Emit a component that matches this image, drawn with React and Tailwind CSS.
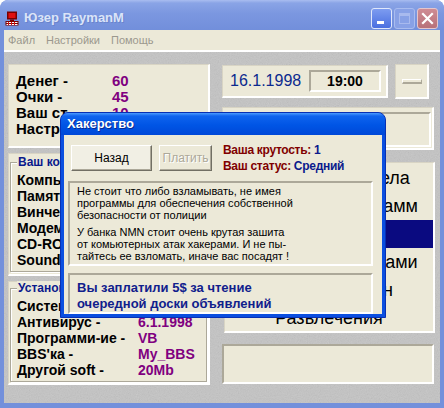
import React from "react";

const panel =
  "bg-[#ece9d8] border-t border-l border-t-[#d8d4c4] border-l-[#d8d4c4] border-b-2 border-r-2 border-b-white border-r-white";
const sunken =
  "bg-[#ece9d8] border-t-2 border-l-2 border-t-[#aca899] border-l-[#aca899] border-b-2 border-r-2 border-b-white border-r-white";

function PcIcon() {
  return (
    <svg width="15" height="15" viewBox="0 0 15 15">
      <rect x="2" y="0.5" width="10" height="8" fill="#7a0000" />
      <rect x="3.5" y="2" width="7" height="5" fill="#e01010" />
      <rect x="5" y="8.5" width="4" height="1.5" fill="#7a0000" />
      <rect x="0.5" y="10" width="13" height="4.5" fill="#7a0000" />
      <rect x="1.5" y="11" width="11" height="1" fill="#ffffff" />
      <rect x="1.5" y="13" width="11" height="1" fill="#ffffff" />
      <rect x="3" y="11" width="1" height="3" fill="#e01010" />
      <rect x="6" y="11" width="1" height="3" fill="#e01010" />
      <rect x="9" y="11" width="1" height="3" fill="#e01010" />
    </svg>
  );
}

function TitleBar() {
  return (
    <div className="flex h-[30px] items-start rounded-t-[8px] bg-[linear-gradient(to_bottom,#a9bdf0_0%,#8aa4e6_10%,#7b97e0_45%,#728fdb_100%)] pl-[5px] pr-[6px] pt-[6px]">
      <div className="flex h-[24px] items-center gap-[4px]">
        <PcIcon />
        <span className="text-[13px] font-bold text-[#dbe4f8] [text-shadow:1px_1px_0_#6a84cc]">Юзер RaymanM</span>
      </div>
      <div className="ml-auto mt-[2px] flex gap-[2px]">
        <div className="relative h-[21px] w-[21px] rounded-[3px] border border-[#dfe7fb] bg-[linear-gradient(to_bottom,#7d9cf0,#4a6fe0)]">
          <div className="absolute bottom-[4px] left-[5px] h-[3px] w-[7px] bg-white" />
        </div>
        <div className="flex h-[21px] w-[21px] items-center justify-center rounded-[3px] border border-[#a9bcef] bg-[#88a1e6]">
          <div className="h-[11px] w-[11px] border border-t-[3px] border-[#a8baee]" />
        </div>
        <div className="flex h-[21px] w-[21px] items-center justify-center rounded-[3px] border border-[#e4c6cc] bg-[linear-gradient(to_bottom,#cf8c94,#b7717a)]">
          <svg width="13" height="13" viewBox="0 0 13 13">
            <path d="M2 2 L11 11 M11 2 L2 11" stroke="#ffffff" strokeWidth="2.2" strokeLinecap="square" />
          </svg>
        </div>
      </div>
    </div>
  );
}

function Menu() {
  return (
    <div className="flex h-[22px] items-center gap-[11px] border-b-2 border-white bg-[#ece9d8] pl-[4px] text-[11px] text-[#9b988e]">
      <span>Файл</span>
      <span>Настройки</span>
      <span>Помощь</span>
    </div>
  );
}

function Group({ title, className, children }) {
  return (
    <div className={`relative border border-[#aca899] shadow-[inset_1px_1px_0_#ffffff,1px_1px_0_#ffffff] ${className}`}>
      <span className="absolute left-[6px] top-[-8px] bg-[#ece9d8] px-[1px] text-[12px] font-bold leading-[14px] text-[#0a1a8c]">
        {title}
      </span>
      {children}
    </div>
  );
}

function Rows({ rows, col }) {
  return (
    <div className={`grid ${col} text-[14px] font-bold leading-[16px]`}>
      {rows.map(([label, value]) => (
        <React.Fragment key={label}>
          <span className="whitespace-nowrap text-black">{label}</span>
          <span className="whitespace-nowrap text-[#800080]">{value}</span>
        </React.Fragment>
      ))}
    </div>
  );
}

function LeftColumn() {
  return (
    <div className="flex w-[202px] flex-col gap-[5px]">
      <div className={`${panel} h-[84px] pl-[7px] pt-[8px]`}>
        <div className="grid grid-cols-[96px_1fr] whitespace-nowrap text-[15px] font-bold leading-[16px]">
          <span>Денег -</span>
          <span className="text-[#800080]">60</span>
          <span>Очки -</span>
          <span className="text-[#800080]">45</span>
          <span>Ваш ст</span>
          <span className="text-[#800080]">10</span>
          <span>Настр</span>
          <span />
        </div>
      </div>
      <div className={`${panel} h-[123px] pl-[1px] pt-[8px]`}>
        <Group title="Ваш компьютер" className="mr-[1px] h-[110px] pl-[6px] pt-[9px]">
          <Rows
            col="grid-cols-[96px_1fr]"
            rows={[
              ["Компьютер", ""],
              ["Память", ""],
              ["Винчестер", ""],
              ["Модем", ""],
              ["CD-ROM", ""],
              ["Sound", ""],
            ]}
          />
        </Group>
      </div>
      <div className={`${panel} h-[104px] pl-[1px] pt-[6px]`}>
        <Group title="Установленный софт" className="mr-[1px] h-[94px] pl-[6px] pt-[9px]">
          <Rows
            col="grid-cols-[121px_1fr]"
            rows={[
              ["Система", ""],
              ["Антивирус -", "6.1.1998"],
              ["Программи-ие -", "VB"],
              ["BBS'ка -", "My_BBS"],
              ["Другой soft -", "20Mb"],
            ]}
          />
        </Group>
      </div>
    </div>
  );
}

const menuItems = ["Справочник отдела", "Написание программ", "", "Общение с хакерами", "Идти в магазин", "Развлечения"];

function RightColumn() {
  return (
    <div className="flex w-[213px] flex-col">
      <div className="flex h-[35px] gap-[7px]">
        <div className={`${panel} mt-[1px] flex h-[33px] w-[166px] items-center justify-between pl-[7px] pr-[5px]`}>
          <span className="text-[16px] text-[#0b2a8e]">16.1.1998</span>
          <div className={`${sunken} flex h-[22px] w-[72px] items-center justify-center text-[14px] font-bold text-black`}>
            19:00
          </div>
        </div>
        <div className={`${panel} flex h-[35px] w-[34px] items-center justify-center`}>
          <div className="h-[5px] w-[20px] border-t border-l border-white border-b-2 border-r border-b-[#aca899] border-r-[#aca899]" />
        </div>
      </div>
      <div className={`${panel} mt-[8px] flex h-[43px] w-[212px] items-start pl-[7px] pr-[1px]`}>
        <span className="pt-[1px] text-[12px] font-bold text-[#0a1a8c]">Ваша</span>
        <div className={`${sunken} ml-auto mt-[4px] h-[35px] w-[100px]`} />
      </div>
      <div className={`${panel} ml-[2px] mt-[12px] h-[171px] w-[211px] pt-[1px]`}>
        {menuItems.map((item, i) => (
          <div
            key={i}
            className={`flex h-[28px] items-center justify-center whitespace-nowrap text-[18px] ${i === 2 ? "bg-[#0a0a80] text-white" : "text-black"}`}
          >
            {item}
          </div>
        ))}
      </div>
      <div className={`${sunken} mt-[11px] h-[40px] w-[212px]`} />
    </div>
  );
}

function HackDialog() {
  return (
    <div className="absolute left-[60px] top-[112px] flex h-[206px] w-[326px] flex-col rounded-t-[8px] border border-[#0730b4] bg-[#0b4fe0]">
      <div className="flex h-[27px] items-center rounded-t-[7px] bg-[linear-gradient(to_bottom,#4b9bff_0%,#0f63ee_14%,#0055e5_55%,#0048d8_100%)] pl-[6px] text-[13px] font-bold text-white [text-shadow:1px_1px_0_#0a2a90]">
        Хакерство
      </div>
      <div className="mx-[3px] mb-[3px] flex flex-1 flex-col bg-[#ece9d8] pt-[10px]">
        <div className="flex items-start pl-[7px]">
          <div className="flex h-[26px] w-[81px] items-center justify-center border border-t-white border-l-white border-b-[#716f64] border-r-[#716f64] bg-[#f1efe4] text-[12px] text-black shadow-[inset_-1px_-1px_0_#aca899]">
            Назад
          </div>
          <div className="ml-[7px] flex h-[26px] w-[53px] items-center justify-center border border-t-white border-l-white border-b-[#716f64] border-r-[#716f64] bg-[#ece9d8] text-[12px] text-[#aca899] shadow-[inset_-1px_-1px_0_#aca899] [text-shadow:1px_1px_0_#ffffff]">
            Платить
          </div>
          <div className="-mt-[3px] ml-[11px] text-[12px] font-bold leading-[16px] tracking-[-0.3px] text-[#800000]">
            <div>
              Ваша крутость: <span className="text-[#0a1a8c]">1</span>
            </div>
            <div>
              Ваш статус: <span className="text-[#0a1a8c]">Средний</span>
            </div>
          </div>
        </div>
        <div className={`${sunken} ml-[4px] mr-[9px] mt-[7px] h-[85px] pl-[7px] pt-[2px] text-[11px] leading-[12px] text-black`}>
          <p>
            Не стоит что либо взламывать, не имея
            <br />
            программы для обеспечения собственной
            <br />
            безопасности от полиции
          </p>
          <p className="mt-[5px]">
            У банка NMN стоит очень крутая зашита
            <br />
            от комьютерных атак хакерами. И не пы-
            <br />
            тайтесь ее взломать, иначе вас посадят !
          </p>
        </div>
        <div className={`${sunken} ml-[4px] mr-[9px] mt-[7px] flex-1 pl-[7px] pt-[5px] text-[13px] font-bold leading-[16px] text-[#10208c]`}>
          Вы заплатили 5$ за чтение
          <br />
          очередной доски объявлений
        </div>
      </div>
    </div>
  );
}

export default function App() {
  return (
    <div className="relative h-[408px] w-[444px] overflow-hidden rounded-t-[8px] bg-[#7390db] font-['Liberation_Sans',Arial,sans-serif]">
      <TitleBar />
      <div className="mx-[4px] flex flex-col">
        <Menu />
        <div className="relative isolate flex h-[351px] gap-[12px] bg-[#c4c4c4] pl-[4px] pt-[12px]">
          <svg className="absolute inset-0 -z-10 h-full w-full opacity-[0.22]">
            <filter id="grain">
              <feTurbulence type="fractalNoise" baseFrequency="0.9" numOctaves="2" seed="4" />
              <feColorMatrix type="saturate" values="0" />
            </filter>
            <rect width="100%" height="100%" filter="url(#grain)" />
          </svg>
          <LeftColumn />
          <RightColumn />
        </div>
      </div>
      <HackDialog />
    </div>
  );
}
